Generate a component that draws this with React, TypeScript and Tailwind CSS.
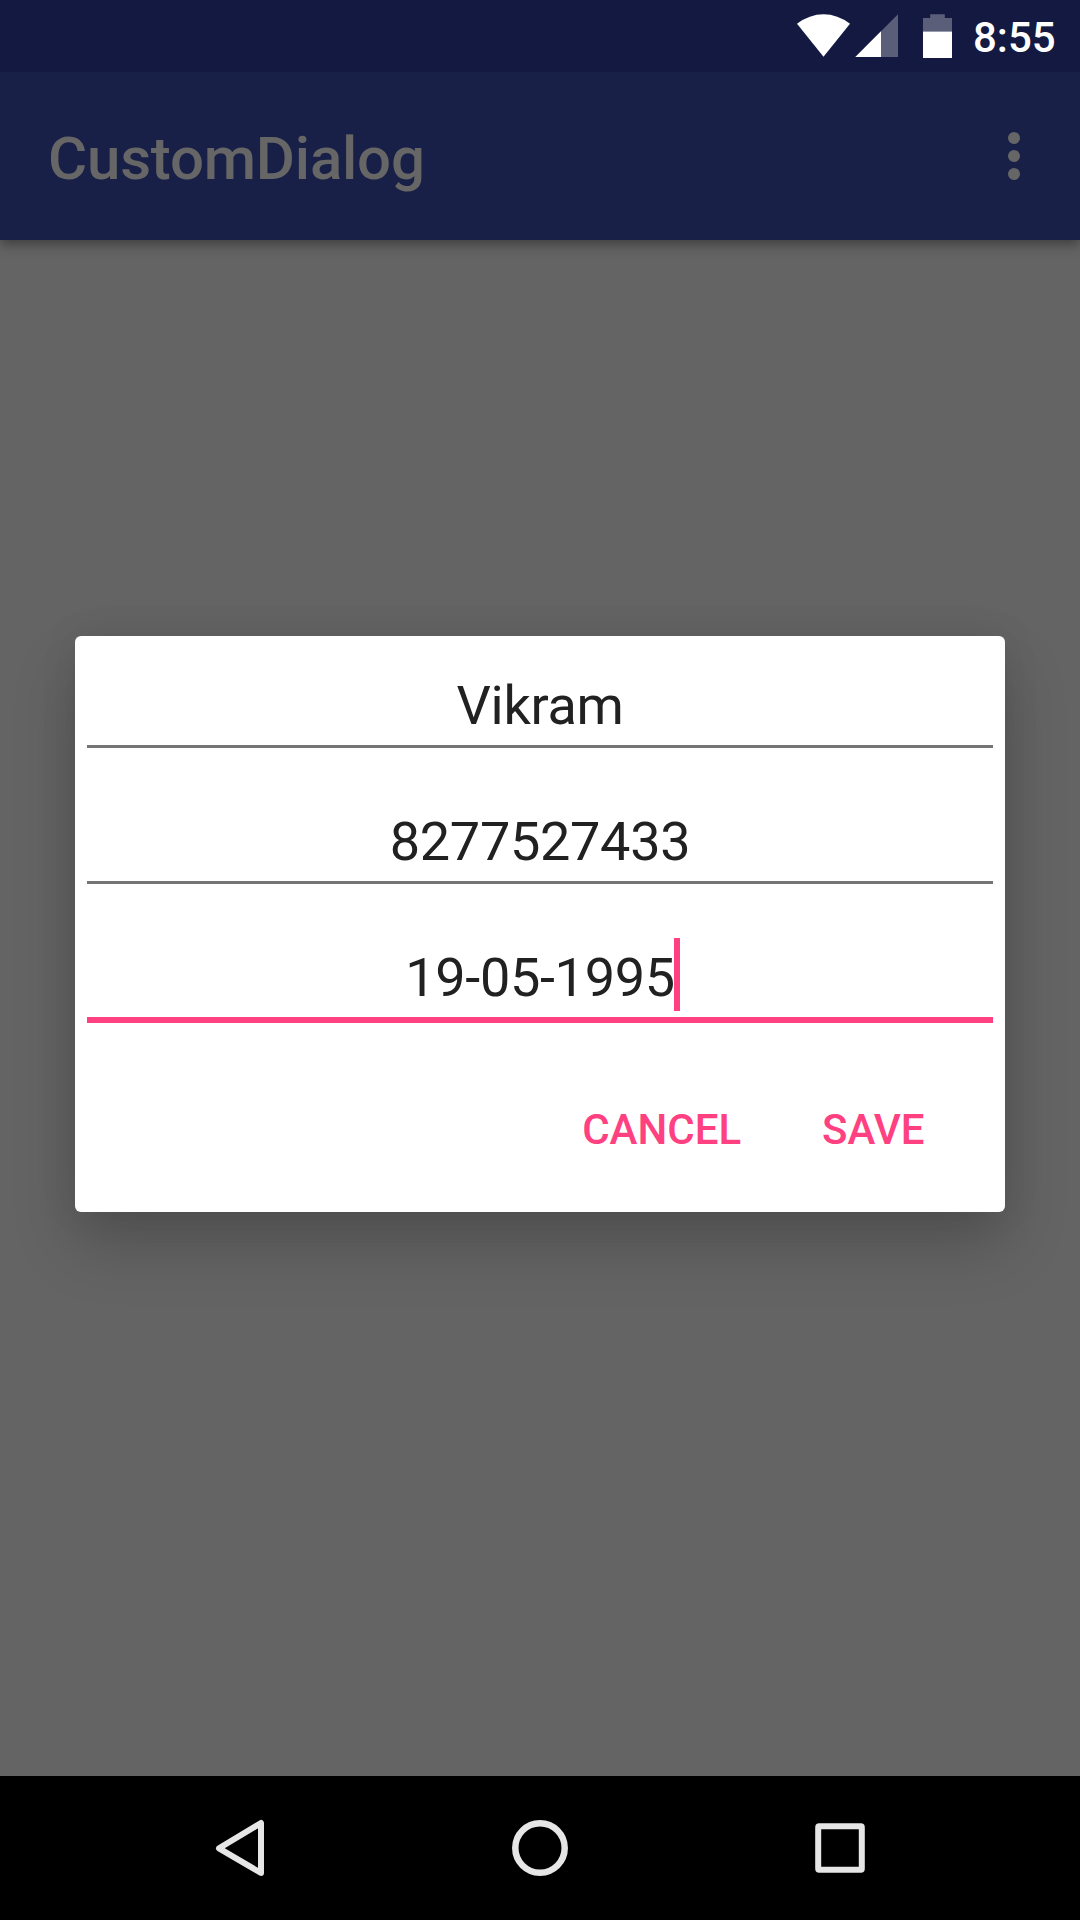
import React from "react";

function StatusBar() {
  return (
    <div className="relative z-10 flex h-[72px] items-start bg-[#131940] text-white">
      <svg className="ml-auto h-[72px] w-[180px] shrink-0" viewBox="780 0 180 72" fill="white">
        <path d="M797 23.7Q809.5 14.2 823.5 14.2T850 23.7L823.5 56.7Z" />
        <path d="M898 14.3V57H855.3Z" fillOpacity="0.3" />
        <path d="M881 31.3V57H855.3Z" />
        <path d="M930.2 14.2H944.8V18H952V31.5H923V18H930.2Z" fillOpacity="0.3" />
        <path d="M923 31.5H952V58H923Z" />
      </svg>
      <span className="w-[120px] pl-[13px] pt-[13px] text-[42px] leading-[50px] font-medium">8:55</span>
    </div>
  );
}

function AppBar() {
  return (
    <header className="relative flex h-[168px] items-center justify-between bg-[#192048] pl-12 pr-[60px] text-[#666666] shadow-[0_4px_12px_rgba(0,0,0,0.4)]">
      <h1 className="pt-[5px] text-[60px] leading-[70px] font-medium tracking-[-0.2px]">CustomDialog</h1>
      <button aria-label="More options" className="flex flex-col gap-1.5">
        <span className="size-3 rounded-full bg-[#666666]" />
        <span className="size-3 rounded-full bg-[#666666]" />
        <span className="size-3 rounded-full bg-[#666666]" />
      </button>
    </header>
  );
}

function CustomDialog() {
  return (
    <section
      role="dialog"
      className="mx-[75px] h-[576px] rounded-[6px] bg-white px-3 text-center text-[54px] leading-[72px] tracking-[-0.3px] text-[#212121] shadow-[0_32px_64px_rgba(0,0,0,0.2),0_0_40px_rgba(0,0,0,0.07)]"
    >
      <div className="h-[112px] border-b-[3px] border-[#757575] pt-[34px]">Vikram</div>
      <div className="h-[136px] border-b-[3px] border-[#757575] pt-[58px]">8277527433</div>
      <div className="h-[139px] border-b-[6px] border-[#ff4081] pt-[58px]">
        <span className="relative">
          19-05-1995
          <span className="absolute top-[-8px] left-full -ml-px h-[73px] w-[6px] bg-[#ff4081]" />
        </span>
      </div>
      <div className="flex justify-end gap-[81px] pt-[82px] pr-[68.5px] text-[42px] leading-[50px] font-medium tracking-normal text-[#ff4081]">
        <button>CANCEL</button>
        <button>SAVE</button>
      </div>
    </section>
  );
}

function NavigationBar() {
  return (
    <nav className="flex h-[144px] items-center justify-center gap-[204px] bg-black">
      <svg className="size-24" viewBox="192 1800 96 96" fill="none" stroke="#e6e6e6" strokeWidth="6" strokeLinejoin="round">
        <path d="M261 1823V1873L219 1848.3Z" />
      </svg>
      <svg className="size-24" viewBox="492 1800 96 96" fill="none" stroke="#e6e6e6" strokeWidth="6.5">
        <circle cx="540" cy="1848" r="24.7" />
      </svg>
      <svg className="size-24" viewBox="792 1800 96 96" fill="none" stroke="#e6e6e6" strokeWidth="6">
        <rect x="818.2" y="1826.2" width="43.6" height="43.6" rx="1" />
      </svg>
    </nav>
  );
}

export default function App() {
  return (
    <div className="flex h-[1920px] w-[1080px] flex-col overflow-hidden bg-[#646464] font-['Roboto',sans-serif]">
      <StatusBar />
      <AppBar />
      <main className="flex-1 pt-[396px]">
        <CustomDialog />
      </main>
      <NavigationBar />
    </div>
  );
}
